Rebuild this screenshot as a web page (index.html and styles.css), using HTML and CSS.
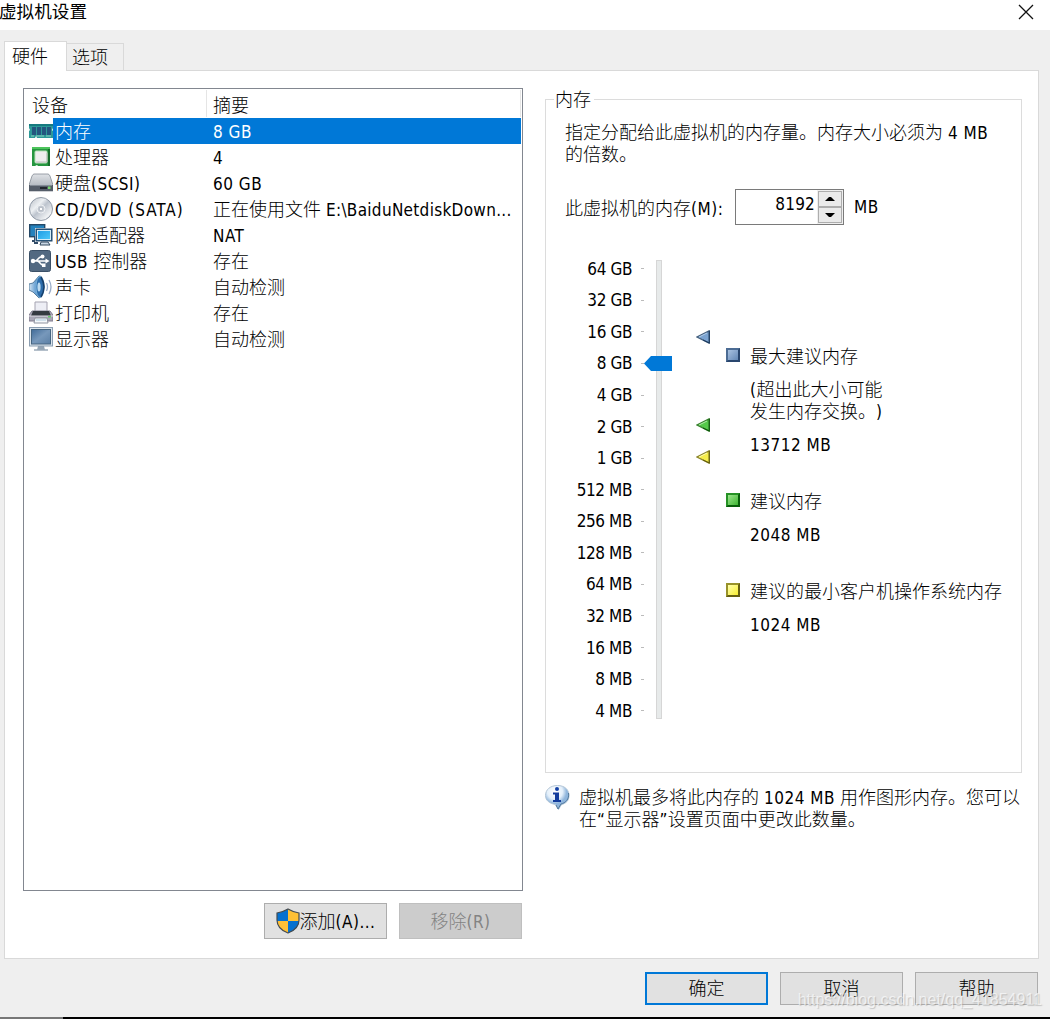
FILE: index.html
```html
<!DOCTYPE html>
<html lang="zh-CN">
<head>
<meta charset="utf-8">
<title>虚拟机设置</title>
<link rel="stylesheet" href="styles.css">
</head>
<body>
<div class="window">
  <header class="titlebar"><h1>虚拟机设置</h1>
    <svg class="close" width="16" height="16" viewBox="0 0 16 16"><path d="M1 1L15 15M15 1L1 15" stroke="#111" stroke-width="1.3"/></svg>
  </header>
  <nav class="tabs"><div class="tab active">硬件</div><div class="tab">选项</div></nav>
  <main class="panel">
    <section class="left">
      <div class="list">
        <div class="row head"><span class="name">设备</span><span class="sum">摘要</span></div>
        <div class="row selected">
          <svg class="ico" viewBox="0 0 24 24"><rect y="5" width="24" height="14" fill="#2d9a98"/><path d="M0 6h24" stroke="#167b80" stroke-width="2"/><path d="M3 8h4v8H3zM8 8h4v8H8zM13 8h4v8h-4zM18 8h4v8h-4z" fill="#24567f"/><path d="M2 17h3m2 0h8m2 0h5" stroke="#8cd2bd"/><path d="M6 19l1-2 1 2zM0 9v3l1-1zM24 9v3l-1-1z" fill="#fff"/></svg>
          <span class="name">内存</span><span class="sum"><i>8 GB</i></span></div>
        <div class="row">
          <svg class="ico" viewBox="0 0 24 24"><path d="M3 3h18v18H9l-1-1-2 1H3z" fill="#269640"/><path d="M3 3h18" stroke="#4cc45b" stroke-width="2"/><path d="M20 4v17" stroke="#176d2c" stroke-width="2"/><rect x="6" y="6" width="12" height="12" rx="1" fill="#eee" stroke="#b8dfb8"/><path d="M7 17h11V8" fill="none" stroke="#bcbcbc"/></svg>
          <span class="name">处理器</span><span class="sum"><i>4</i></span></div>
        <div class="row">
          <svg class="ico" viewBox="0 0 24 24"><defs><linearGradient id="disk" x2="0" y2="1"><stop stop-color="#dfe2e6"/><stop offset="1" stop-color="#a3a9b1"/></linearGradient></defs><path d="M5 3h14q1 0 2 2l3 9v6H0v-6l3-9q1-2 2-2z" fill="url(#disk)" stroke="#858c96" stroke-width=".8"/><path d="M0 14h24v6H0z" fill="#555d69"/><path d="M1 14h22" stroke="#b6bcc4"/><path d="M11 17h7" stroke="#22262d" stroke-width="2"/><rect x="19" y="15.5" width="2.5" height="2.5" fill="#77d46c"/></svg>
          <span class="name">硬盘<i>(SCSI)</i></span><span class="sum"><i>60 GB</i></span></div>
        <div class="row">
          <svg class="ico" viewBox="0 0 24 24"><defs><linearGradient id="disc" x2="1" y2="1"><stop stop-color="#b5bbc3"/><stop offset=".35" stop-color="#edf0f3"/><stop offset=".5" stop-color="#bdc4ce"/><stop offset=".8" stop-color="#f0f2f4"/><stop offset="1" stop-color="#8c95a2"/></linearGradient></defs><circle cx="12" cy="12" r="11.5" fill="url(#disc)" stroke="#929ba8"/><circle cx="12" cy="12" r="4" fill="#c5cbd3" stroke="#eef0f3"/><circle cx="12" cy="12" r="1.8" fill="#fff" stroke="#929ba8" stroke-width=".6"/></svg>
          <span class="name"><i class="wide">CD/DVD (SATA)</i></span><span class="sum">正在使用文件 <i class="path">E:\BaiduNetdiskDown...</i></span></div>
        <div class="row">
          <svg class="ico" viewBox="0 0 24 24"><defs><linearGradient id="net" x2="1" y2="1"><stop stop-color="#1793df"/><stop offset="1" stop-color="#54d2ff"/></linearGradient></defs><rect x=".7" y="1.7" width="15" height="12" fill="#2582bd" stroke="#254866" stroke-width="1.4"/><path d="M3 18h5M6 14v6h3" stroke="#334d68" stroke-width="2" fill="none"/><rect x="6.5" y="5.5" width="17" height="13" fill="url(#net)" stroke="#fff"/><rect x="7.2" y="6.2" width="15.6" height="11.6" fill="none" stroke="#25496c" stroke-width="1.4"/><rect x="8.5" y="7.5" width="13" height="9" fill="none" stroke="#d5edf8"/><path d="M12 19h7l2 3H11z" fill="#cad7e4" stroke="#344a60"/></svg>
          <span class="name">网络适配器</span><span class="sum"><i>NAT</i></span></div>
        <div class="row">
          <svg class="ico" viewBox="0 0 24 24"><rect x=".5" y="1.5" width="21" height="21" rx="2" fill="#526981" stroke="#3b5067"/><path d="M3 12h14M6 12c3 0 3-4 6-4h2M8 12c3 0 3 4 6 4h2" stroke="#fff" stroke-width="1.5" fill="none"/><circle cx="4" cy="12" r="2.2" fill="#fff"/><path d="M20.5 12l-4-2.5v5z" fill="#fff"/><circle cx="13.5" cy="7.5" r="2" fill="#fff"/><path d="M13 14.5h3.5V18H13z" fill="#fff"/></svg>
          <span class="name"><i>USB </i>控制器</span><span class="sum">存在</span></div>
        <div class="row">
          <svg class="ico" viewBox="0 0 24 24"><defs><linearGradient id="snd"><stop stop-color="#d5e5f2"/><stop offset=".5" stop-color="#5796cf"/><stop offset="1" stop-color="#174777"/></linearGradient></defs><path d="M0 9l4-1 6-7q4-1 5 11-1 10-5 11l-6-6-4-2z" fill="url(#snd)" stroke="#557d9e"/><ellipse cx="11" cy="12" rx="4" ry="10.5" fill="#2c6dac" stroke="#7db2d9"/><path d="M12 2q6 10 0 20" fill="none" stroke="#173e69" stroke-width="1.5"/><ellipse cx="10" cy="12" rx="1.6" ry="4.5" fill="#bbdaf0"/><path d="M17.5 8q2 4 0 8M20 5q4 7 0 14" fill="none" stroke="#9aadc9" stroke-width="1.3"/></svg>
          <span class="name">声卡</span><span class="sum">自动检测</span></div>
        <div class="row">
          <svg class="ico" viewBox="0 0 24 24"><path d="M6 1h12v12H6z" fill="#edeef5" stroke="#a5a3b1"/><path d="M3 10h18l3 4v6H0v-6z" fill="#aaa6b6" stroke="#817d8e"/><path d="M4 10h16l2 5H2z" fill="#353941"/><path d="M0 15h24" stroke="#dfdde6"/><rect x="19" y="15" width="3" height="1.5" fill="#67c969"/><path d="M6 17h12l1 5H5z" fill="#f5f8fb" stroke="#8f94a0"/><path d="M7 19h10" stroke="#a9c7dc"/></svg>
          <span class="name">打印机</span><span class="sum">存在</span></div>
        <div class="row">
          <svg class="ico" viewBox="0 0 24 24"><defs><linearGradient id="mon" x2="1" y2="1"><stop stop-color="#416b98"/><stop offset=".5" stop-color="#7798bb"/><stop offset="1" stop-color="#5b7fa5"/></linearGradient></defs><path d="M9 19h6l1 4H8z" fill="#94a5b5"/><rect x=".5" y=".5" width="23" height="18.5" fill="#dce5ec" stroke="#8b9eb2"/><rect x="2.5" y="2.5" width="19" height="14.5" fill="url(#mon)" stroke="#466581"/><path d="M5 23h14" stroke="#9baab8" stroke-width="1.5"/></svg>
          <span class="name">显示器</span><span class="sum">自动检测</span></div>
      </div>
      <div class="listbuttons">
        <button class="btn"><svg width="24" height="26" viewBox="0 0 24 26"><path d="M12 1q5 3 11 4v7q0 9-11 13Q1 21 1 12V5Q7 4 12 1z" fill="#ffc036"/><path d="M12 1v12H1V5Q7 4 12 1zM12 13h11q0 8-11 12z" fill="#0671cf"/><path d="M12 1q5 3 11 4v7q0 9-11 13Q1 21 1 12V5Q7 4 12 1z" fill="none" stroke="#444b52" stroke-width="1.2"/></svg><span>添加<i>(A)...</i></span></button>
        <button class="btn disabled" disabled><span>移除<i>(R)</i></span></button>
      </div>
    </section>
    <section class="right">
      <div class="group">
        <div class="caption">内存</div>
        <p class="desc">指定分配给此虚拟机的内存量。内存大小必须为 <i>4 MB</i><br>的倍数。</p>
        <div class="field"><span class="label">此虚拟机的内存<i>(M):</i></span>
          <div class="spin"><i class="value">8192</i><div class="arrows">
            <div class="arrow"><svg width="10" height="6" viewBox="0 0 10 6"><path d="M0 5L4 1h2l4 4z"/></svg></div>
            <div class="arrow"><svg width="10" height="6" viewBox="0 0 10 6"><path d="M0 1h10L6 5H4z"/></svg></div></div></div><i>MB</i></div>
        <div class="memory">
          <div class="scale">
            <i>64 GB</i><i>32 GB</i><i>16 GB</i><i>8 GB</i><i>4 GB</i><i>2 GB</i><i>1 GB</i><i>512 MB</i><i>256 MB</i><i>128 MB</i><i>64 MB</i><i>32 MB</i><i>16 MB</i><i>8 MB</i><i>4 MB</i>
          </div>
          <div class="track"><svg class="thumb" width="28" height="15" viewBox="0 0 28 15"><path d="M0 7.5L7 0h21v15H7z" fill="#0078d7"/></svg></div>
          <div class="markers">
            <svg class="mk max" viewBox="0 0 14 14"><path d="M13.2 .8v12.4L1 7z" fill="#7ba3d1" stroke="#46617f" stroke-width="1.3"/><path d="M13.3 1v12L7 10" fill="none" stroke="#17375d"/><path d="M3 7l8-4" stroke="#b4cfeb"/></svg>
            <svg class="mk rec" viewBox="0 0 14 14"><path d="M13.2 .8v12.4L1 7z" fill="#55c94a" stroke="#39812f" stroke-width="1.3"/><path d="M13.3 1v12L7 10" fill="none" stroke="#075307"/><path d="M3 7l8-4" stroke="#b2edab"/></svg>
            <svg class="mk min" viewBox="0 0 14 14"><path d="M13.2 .8v12.4L1 7z" fill="#f5ed4c" stroke="#8b842d" stroke-width="1.3"/><path d="M13.3 1v12L7 10" fill="none" stroke="#625d08"/><path d="M3 7l8-4" stroke="#ffffb6"/></svg>
          </div>
          <div class="legend">
            <div class="item"><span class="sq blue"></span><div><p>最大建议内存</p><p class="note"><i>(</i>超出此大小可能<br>发生内存交换。<i>)</i></p><p><i>13712 MB</i></p></div></div>
            <div class="item"><span class="sq green"></span><div><p>建议内存</p><p><i>2048 MB</i></p></div></div>
            <div class="item"><span class="sq yellow"></span><div><p>建议的最小客户机操作系统内存</p><p><i>1024 MB</i></p></div></div>
          </div>
        </div>
      </div>
      <div class="info">
        <svg width="25" height="25" viewBox="0 0 25 25"><defs><radialGradient id="inf" cx=".4" cy=".25"><stop stop-color="#fff"/><stop offset=".65" stop-color="#e3effa"/><stop offset="1" stop-color="#8fb5dc"/></radialGradient></defs><path d="M12.5 .5c7 0 11.500 4 11.500 10 0 5-3 8-7.500 9l-3 5-3-5c-6-1-10-4-10-9 0-6 5-10 12-10z" fill="url(#inf)" stroke="#b4c6d6"/><path d="M23.500 8c1 6-3 10-7.500 11l-3 5-2-4" fill="none" stroke="#51799d"/><circle cx="12" cy="4" r="2" fill="#1541a5"/><path d="M8 7.5h6V15h2v2H8v-2h2V9.5H8z" fill="#123b9c"/></svg>
        <p>虚拟机最多将此内存的 <i>1024 MB</i> 用作图形内存。您可以<br>在<i>“</i>显示器<i>”</i>设置页面中更改此数量。</p>
      </div>
    </section>
  </main>
  <footer class="actions"><button class="btn primary"><span>确定</span></button><button class="btn"><span>取消</span></button><button class="btn"><span>帮助</span></button></footer>
  <div class="edge"></div>
  <div class="watermark">https://blog.csdn.net/qq_41854911</div>
</div>
</body>
</html>
```
FILE: styles.css
```css
* { box-sizing: border-box; }
body { margin: 0; background: #efefef; color: #000; font: 300 18px/22px "Noto Sans CJK SC", sans-serif; text-spacing-trim: space-all; word-spacing: 1px; }
p, h1 { margin: 0; }
i { font: 400 17px/0 "DejaVu Sans Condensed", "DejaVu Sans", sans-serif; font-stretch: condensed; white-space: pre; letter-spacing: .5px; word-spacing: 0; }
.wide { letter-spacing: 1px; }
.path { letter-spacing: .3px; }
svg { display: block; flex: none; }
.window { position: relative; width: 1050px; height: 1019px; display: flex; flex-direction: column; overflow: hidden; }
.titlebar { height: 30px; background: #fff; display: flex; justify-content: space-between; padding: 0 16px 0 0; }
.titlebar h1 { font-size: 17.6px; line-height: 22px; font-weight: 400; margin-left: -1px; }
.close { margin-top: 4px; }
.tabs { display: flex; height: 41px; padding: 11px 0 0 4px; align-items: flex-end; position: relative; z-index: 1; }
.tab { width: 57px; height: 28px; border: 1px solid #d9d9d9; border-left: 0; padding: 1px 0 0 5px; }
.tab.active { width: 63px; height: 30px; background: #fff; border-left: 1px solid #d9d9d9; border-bottom: 0; padding: 2px 0 0 7px; }
.panel { width: 1035px; height: 889px; margin: -1px 0 0 4px; border: 1px solid #d9d9d9; background: #fff; display: flex; gap: 22px; padding: 17px 16px 0 18px; }
.left { width: 500px; }
.list { height: 803px; border: 1px solid #828790; }
.row { height: 26px; display: flex; align-items: center; padding-left: 5px; padding-right: 1px; white-space: nowrap; }
.ico { width: 24px; height: 24px; }
.name { width: 153px; height: 26px; line-height: 24px; padding-left: 2px; }
.sum { flex: 1; height: 26px; line-height: 24px; padding-left: 7px; }
.head { height: 29px; align-items: stretch; padding: 1px 1px 1px 8px; }
.head .name { width: 175px; line-height: 28px; border-right: 1px solid #e5e5e5; height: 27px; padding-left: 0; }
.head .sum { height: 27px; line-height: 28px; border-right: 1px solid #e5e5e5; padding-left: 6px; }
.selected .name, .selected .sum { background: #0078d7; color: #fff; }
.listbuttons { display: flex; justify-content: flex-end; gap: 12px; padding: 12px 1px 0 0; }
.btn { width: 123px; height: 33px; border: 1px solid #adadad; background: #e1e1e1; padding: 0; color: #000; font: inherit; display: flex; align-items: center; justify-content: center; }
.btn span { margin-top: -3px; white-space: nowrap; }
.listbuttons .btn { height: 36px; }
.btn.disabled { background: #ccc; border-color: #bfbfbf; color: #838383; }
.btn.primary { border: 2px solid #0078d7; }
.right { width: 477px; padding-top: 11px; }
.group { height: 674px; border: 1px solid #dcdcdc; padding-left: 20px; }
.caption { width: 40px; margin: -13px 0 0 -12px; padding-left: 1px; background: #fff; height: 22px; }
.desc { height: 44px; margin-top: 11px; margin-left: -1px; white-space: nowrap; }
.field { display: flex; height: 36px; align-items: center; margin-top: 25px; }
.label { width: 170px; margin-left: -1px; white-space: nowrap; }
.spin { width: 109px; height: 36px; border: 1px solid #7a7a7a; display: flex; justify-content: flex-end; margin-right: 10px; }
.value { line-height: 22px; letter-spacing: .2px; padding: 3px 2px 0 0; }
.arrows { width: 26px; background: #efefef; padding: 1px; display: flex; flex-direction: column; }
.arrow { flex: 1; border: 1px solid #adadad; display: flex; align-items: center; justify-content: center; background: #eaeaea; }
.memory { display: flex; margin-top: 35px; height: 459px; }
.scale { width: 78px; height: 474px; margin-top: -7px; display: grid; grid-template-rows: repeat(15, 31.57px); }
.scale i { display: flex; align-items: center; justify-content: flex-end; line-height: 22px; letter-spacing: -.4px; }
.scale i::after { content: ""; width: 3px; height: 1px; background: #bbb; margin: 0 0 0 9px; }
.track { position: relative; width: 6px; margin-left: 12px; background: #e7eaea; border: 1px solid #d6d6d6; }
.thumb { position: absolute; left: -13px; top: 95px; }
.markers { position: relative; width: 64px; }
.mk { position: absolute; left: 34px; width: 14px; height: 14px; }
.max { top: 70px; }
.rec { top: 158px; }
.min { top: 190px; }
.legend { padding-top: 84px; white-space: nowrap; }
.item { display: flex; gap: 10px; margin-bottom: 35px; }
.item p + p { margin-top: 11px; }
.sq { width: 14px; height: 14px; margin-top: 4px; border: 2px solid; }
.blue { background: linear-gradient(135deg, #a9c2e1, #6488b6); border-color: #4c6c94 #29466e #29466e #4c6c94; }
.green { background: linear-gradient(135deg, #9de68d, #3eb532); border-color: #269225 #075e09 #075e09 #269225; }
.yellow { background: linear-gradient(135deg, #ffffad, #f7ed31); border-color: #98922a #655f11 #655f11 #98922a; }
.info { display: flex; gap: 9px; margin-top: 12px; white-space: nowrap; }
.actions { height: 58px; display: flex; justify-content: flex-end; gap: 12px; padding: 13px 12px 0 0; }
.edge { height: 2px; background: linear-gradient(90deg, #777 63px, #000 63px); }
.watermark { position: absolute; right: 8px; top: 989px; font: 16px/22px "Liberation Sans", sans-serif; color: rgba(255,255,255,.65); text-shadow: 1px 1px 1px rgba(120,120,120,.35); }
```
